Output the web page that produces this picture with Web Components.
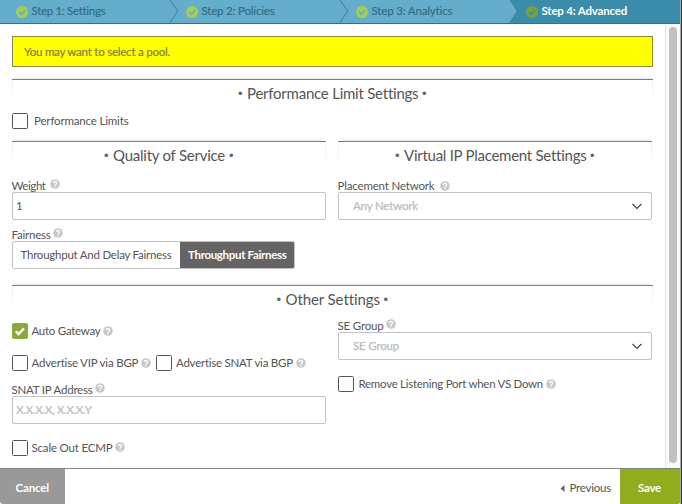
<!DOCTYPE html>
<html lang="en">
<head>
<meta charset="utf-8">
<title>Virtual Service – Advanced</title>
<style>
html,body{margin:0;padding:0;width:682px;height:504px;overflow:hidden;background:#fff}
body{font-family:Lato,"Liberation Sans",sans-serif;font-size:11.5px;color:#555}
</style>
</head>
<body>
<vs-wizard></vs-wizard>
<script>
class Base extends HTMLElement{
  connectedCallback(){
    if(this.shadowRoot) return;
    this.attachShadow({mode:'open'}).innerHTML='<style>*{box-sizing:border-box}:host{box-sizing:border-box}</style>'+this.view();
    this.ready();
  }
  view(){return ''}
  ready(){}
  a(n,d=''){return this.getAttribute(n)??d}
}

/* Text tracked to fill a given width */
customElements.define('vs-text',class extends Base{
  view(){return `<style>:host{display:inline-block;flex:none;white-space:pre;line-height:16px;height:16px;width:${this.a('w')}px}</style><span><slot></slot></span>`}
  ready(){
    const s=this.shadowRoot.querySelector('span');
    const n=this.textContent.length;
    s.style.letterSpacing=((+this.a('w')-s.getBoundingClientRect().width)/n).toFixed(3)+'px';
  }
});

customElements.define('vs-help',class extends Base{
  view(){return `<style>:host{display:block;flex:none;width:10px;height:10px}svg{display:block}</style>
  <svg width="10" height="10" viewBox="0 0 10 10"><circle cx="5" cy="5" r="4.8" fill="#c9c9c9"/><path d="M3.4 3.9C3.4 1.9 6.6 1.9 6.6 3.9C6.6 4.9 5.1 5 5.1 6" fill="none" stroke="#fff" stroke-width="1.3"/><rect x="4.4" y="6.7" width="1.4" height="1.3" fill="#fff"/></svg>`}
});

customElements.define('vs-step',class extends Base{
  view(){
    const on=this.hasAttribute('active');
    return `<style>:host{display:flex;align-items:center;height:23px;padding:0 0 0 15.5px;flex:none;width:${this.a('size','170')}px;color:${on?'#fff':'#2f6d88'};font-weight:${on?'700':'400'};-webkit-text-stroke:${on?0:.2}px}
    svg{display:block;margin-right:4px;flex:none}vs-text{position:relative;top:-.5px}</style>
    <svg width="12" height="12" viewBox="0 0 12 12"><circle cx="6" cy="6" r="6" fill="${on?'#81a034':'#a9ce4b'}"/><path d="M3 5.8L5.3 8.1L9.2 4.2" fill="none" stroke="${on?'#3b8bab':'#65aecb'}" stroke-width="1.9"/></svg><vs-text w="${this.a('w')}">${this.a('label')}</vs-text>`}
});

customElements.define('vs-steps',class extends Base{
  view(){return `<style>:host{display:flex;position:relative;height:24px;width:680px;border-bottom:1px solid #33718a;background:#65aecb}
  .bg{position:absolute;left:0;top:0}.row{display:flex;position:relative}</style>
  <svg class="bg" width="680" height="23"><path d="M510 0H680V23H509.5L517.5 11.3Z" fill="#3b8bab"/><g fill="none" stroke="#397f9e" stroke-width="1"><path d="M170 0L177.8 11L170 22.5"/><path d="M340 0L347.8 11L340 22.5"/><path d="M510 0L517.6 11L510 22.5"/></g></svg>
  <div class="row"><slot></slot></div>`}
});

customElements.define('vs-title',class extends Base{
  view(){return `<style>:host{display:flex;justify-content:center;height:22px;border-top:1px solid #7e7e7e;padding-top:5px;font-size:15px;color:#555;box-shadow:0 -2px 2px -1px #e4e4e4;background:linear-gradient(#eee,#fff) left/1px 100% no-repeat,linear-gradient(#eee,#fff) right/1px 100% no-repeat}
  div{display:flex;align-items:center;height:16px;gap:4px}vs-text{height:20px;line-height:20px}
  i{font:13px/20px "Liberation Sans",sans-serif;color:#666;width:5px;height:20px;position:relative;top:.5px}</style>
  <div><i>•</i><vs-text w="${this.a('w')}">${this.a('label')}</vs-text><i>•</i></div>`}
});

customElements.define('vs-check',class extends Base{
  view(){
    const on=this.hasAttribute('checked');
    return `<style>:host{display:flex;align-items:center;height:16px;flex:none}
    b{width:16px;height:16px;border:1px solid ${on?'#8aab3c':'#555'};background:${on?'#8aab3c':'#fff'};border-radius:1.5px;margin-right:${this.a('gap','3.5')}px;flex:none}
    svg{display:block;margin:-1px}vs-help{margin-left:2.5px;position:relative;top:${this.a('lift','0')}px}</style>
    <b>${on?'<svg width="16" height="16"><path d="M3.7 8.3L6.6 11L12 5.4" fill="none" stroke="#fff" stroke-width="2.4"/></svg>':''}</b><vs-text w="${this.a('w')}">${this.a('label')}</vs-text>${this.hasAttribute('help')?'<vs-help></vs-help>':''}`}
});

customElements.define('vs-field',class extends Base{
  view(){return `<style>:host{display:block}.l{display:flex;height:14px;align-items:center;padding-top:2px}vs-text{margin-left:-.5px}vs-help{margin-left:${this.a('hgap','4')}px;position:relative;top:${this.a('lift','-2')}px}</style>
  <div class="l"><vs-text w="${this.a('w')}">${this.a('label')}</vs-text><vs-help></vs-help></div><slot></slot>`}
});

customElements.define('vs-input',class extends Base{
  view(){return `<style>:host{display:flex;align-items:center;height:28px;border:1px solid #c3c3c3;border-radius:2px;padding:0 9px 0 3px;background:#fff}
  :host([hint]){color:#c4c4c4;font-weight:700}:host([select]){color:#bcbcbc;padding-left:14px;font-weight:400;-webkit-text-stroke:.25px}svg{display:block;margin-left:auto}</style>
  <vs-text w="${this.a('w')}">${this.a('value')}</vs-text>${this.hasAttribute('select')?'<svg width="10" height="7"><path d="M.5 1L5 5.5L9.5 1" fill="none" stroke="#444" stroke-width="1.2"/></svg>':''}`}
});

customElements.define('vs-toggle',class extends Base{
  view(){return `<style>:host{display:flex;width:283px;height:28px;border:1px solid #c3c3c3;border-radius:2px;overflow:hidden}
  div{display:flex;align-items:center;padding-left:7.5px}.a{width:167px}.b{flex:1;background:#646464;color:#fff;font-weight:700;padding-left:8px}</style>
  <div class="a"><vs-text w="151">Throughput And Delay Fairness</vs-text></div><div class="b"><vs-text w="98.5">Throughput Fairness</vs-text></div>`}
});

customElements.define('vs-footer',class extends Base{
  view(){return `<style>:host{display:flex;width:680px;height:36px;border-top:1px solid #858585;background:#fff}
  div{display:flex;align-items:center;padding-top:3px}.c{width:65px;background:#999;color:#fff;font-weight:700;padding-left:15.5px;border-radius:0 0 0 3px}
  .p{margin-left:auto;padding-right:9px;gap:5px}.s{width:60px;background:#91ad1e;color:#fff;font-weight:700;padding-left:18px;border-radius:0 0 2px 0}svg{display:block}</style>
  <div class="c"><vs-text w="33.5">Cancel</vs-text></div>
  <div class="p"><svg width="5" height="7"><path d="M4.5 0V7L.5 3.5Z" fill="#666"/></svg><vs-text w="41.5">Previous</vs-text></div>
  <div class="s"><vs-text w="23">Save</vs-text></div>`}
});

customElements.define('vs-wizard',class extends Base{
  view(){return `<style>
  :host{display:flex;flex-direction:column;width:682px;height:504px;border-right:1px solid #2f3133;box-shadow:inset -1px 0 #aaa}
  main{display:flex;width:680px;height:444px}
  .body{width:665px;padding:12px 12px 0}
  .track{width:15px;border-left:1px solid #e6e6e6;background:#fafafa;padding:3px 0 0 3px}
  .thumb{width:8px;height:436px;border-radius:4px;background:#c1c1c1}
  .alert{display:flex;align-items:center;height:31px;background:#ff0;border:1px solid #8b8b3f;padding-left:11px;color:#84843c;-webkit-text-stroke:.2px;margin-bottom:12px}
  .cols{display:grid;grid-template-columns:314px 314px;column-gap:12px}
  .row{display:flex;gap:4.5px}
  </style>
  <vs-steps>
    <vs-step label="Step 1: Settings" w="73.5"></vs-step><vs-step label="Step 2: Policies" w="73"></vs-step><vs-step label="Step 3: Analytics" w="81"></vs-step><vs-step active label="Step 4: Advanced" w="85.5"></vs-step>
  </vs-steps>
  <main><div class="body">
    <div class="alert"><vs-text w="146">You may want to select a pool.</vs-text></div>
    <vs-title style="width:641px" w="171" label="Performance Limit Settings"></vs-title>
    <vs-check style="margin:12px 0" gap="6" w="94.5" label="Performance Limits"></vs-check>
    <div class="cols" style="height:144px">
      <div>
        <vs-title w="112" label="Quality of Service"></vs-title>
        <vs-field style="margin-top:15px" w="34" label="Weight"><vs-input w="6" value="1"></vs-input></vs-field>
        <vs-field style="margin-top:7px" w="39" hgap="2.5" label="Fairness"><vs-toggle></vs-toggle></vs-field>
      </div>
      <div>
        <vs-title w="182" label="Virtual IP Placement Settings"></vs-title>
        <vs-field style="margin-top:15px" lift="0" hgap="5.5" w="97" label="Placement Network"><vs-input select w="65" value="Any Network"></vs-input></vs-field>
      </div>
    </div>
    <vs-title style="width:641px" w="94" label="Other Settings"></vs-title>
    <div class="cols">
      <div>
        <vs-check style="margin-top:16px" checked help w="69" label="Auto Gateway"></vs-check>
        <div class="row" style="margin-top:16px"><vs-check help w="107" label="Advertise VIP via BGP"></vs-check><vs-check gap="4.5" help w="117" label="Advertise SNAT via BGP"></vs-check></div>
        <vs-field style="margin-top:11px" w="81" hgap="2.5" label="SNAT IP Address"><vs-input hint w="75.5" value="X.X.X.X, X.X.X.Y"></vs-input></vs-field>
        <vs-check style="margin-top:16px" lift="-1.5" help w="81" label="Scale Out ECMP"></vs-check>
      </div>
      <div>
        <vs-field style="margin-top:11px" w="46" hgap="2.5" label="SE Group"><vs-input select w="46" value="SE Group"></vs-input></vs-field>
        <vs-check style="margin-top:16px" gap="4.5" help w="184.5" label="Remove Listening Port when VS Down"></vs-check>
      </div>
    </div>
  </div><div class="track"><div class="thumb"></div></div></main>
  <vs-footer></vs-footer>`}
});
</script>
</body>
</html>
